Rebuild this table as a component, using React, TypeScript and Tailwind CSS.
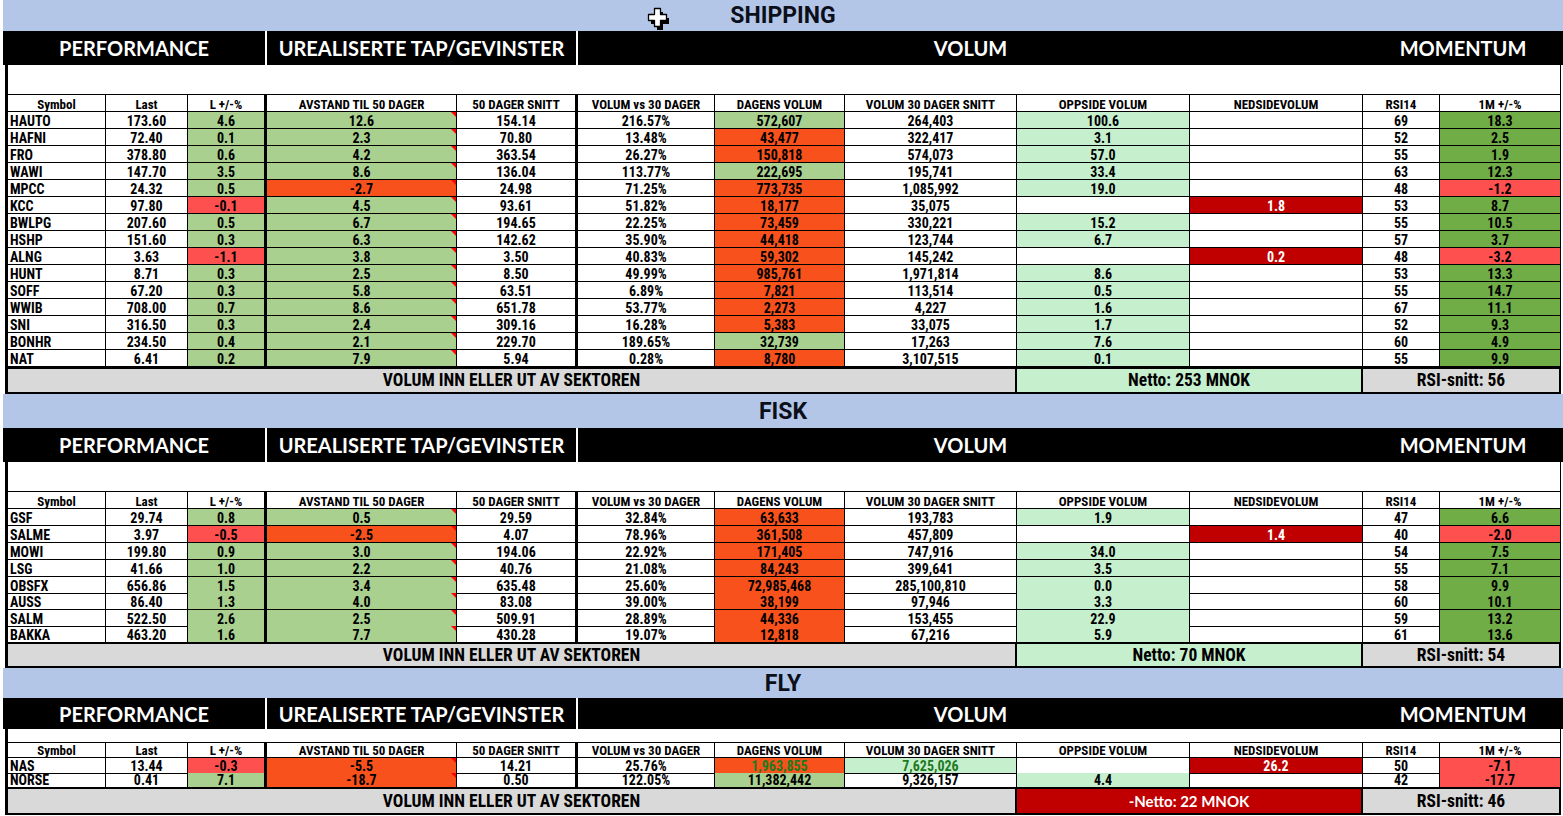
import React from 'react';

type Row = {
  s: string;
  last: string;
  l: string;
  av: string;
  d50: string;
  vvs: string;
  dag: string;
  dagC: 'g' | 'o';
  v30: string;
  opp?: string;
  ned?: string;
  rsi: string;
  m1: string;
  h: string;
  p?: string;
  special?: boolean;
};

const COLS =
  'grid grid-cols-[101px_82px_79px_190px_121px_137px_130px_172px_173px_173px_77px_121px]';

const neg = (v: string) => v.trim().startsWith('-');

const shipping: Row[] = [
  { s: 'HAUTO', last: '173.60', l: '4.6', av: '12.6', d50: '154.14', vvs: '216.57%', dag: '572,607', dagC: 'g', v30: '264,403', opp: '100.6', rsi: '69', m1: '18.3', h: 'h-[17px]' },
  { s: 'HAFNI', last: '72.40', l: '0.1', av: '2.3', d50: '70.80', vvs: '13.48%', dag: '43,477', dagC: 'o', v30: '322,417', opp: '3.1', rsi: '52', m1: '2.5', h: 'h-[17px]' },
  { s: 'FRO', last: '378.80', l: '0.6', av: '4.2', d50: '363.54', vvs: '26.27%', dag: '150,818', dagC: 'o', v30: '574,073', opp: '57.0', rsi: '55', m1: '1.9', h: 'h-[17px]' },
  { s: 'WAWI', last: '147.70', l: '3.5', av: '8.6', d50: '136.04', vvs: '113.77%', dag: '222,695', dagC: 'g', v30: '195,741', opp: '33.4', rsi: '63', m1: '12.3', h: 'h-[17px]' },
  { s: 'MPCC', last: '24.32', l: '0.5', av: '-2.7', d50: '24.98', vvs: '71.25%', dag: '773,735', dagC: 'o', v30: '1,085,992', opp: '19.0', rsi: '48', m1: '-1.2', h: 'h-[17px]' },
  { s: 'KCC', last: '97.80', l: '-0.1', av: '4.5', d50: '93.61', vvs: '51.82%', dag: '18,177', dagC: 'o', v30: '35,075', ned: '1.8', rsi: '53', m1: '8.7', h: 'h-[17px]' },
  { s: 'BWLPG', last: '207.60', l: '0.5', av: '6.7', d50: '194.65', vvs: '22.25%', dag: '73,459', dagC: 'o', v30: '330,221', opp: '15.2', rsi: '55', m1: '10.5', h: 'h-[17px]' },
  { s: 'HSHP', last: '151.60', l: '0.3', av: '6.3', d50: '142.62', vvs: '35.90%', dag: '44,418', dagC: 'o', v30: '123,744', opp: '6.7', rsi: '57', m1: '3.7', h: 'h-[17px]' },
  { s: 'ALNG', last: '3.63', l: '-1.1', av: '3.8', d50: '3.50', vvs: '40.83%', dag: '59,302', dagC: 'o', v30: '145,242', ned: '0.2', rsi: '48', m1: '-3.2', h: 'h-[17px]' },
  { s: 'HUNT', last: '8.71', l: '0.3', av: '2.5', d50: '8.50', vvs: '49.99%', dag: '985,761', dagC: 'o', v30: '1,971,814', opp: '8.6', rsi: '53', m1: '13.3', h: 'h-[17px]' },
  { s: 'SOFF', last: '67.20', l: '0.3', av: '5.8', d50: '63.51', vvs: '6.89%', dag: '7,821', dagC: 'o', v30: '113,514', opp: '0.5', rsi: '55', m1: '14.7', h: 'h-[17px]' },
  { s: 'WWIB', last: '708.00', l: '0.7', av: '8.6', d50: '651.78', vvs: '53.77%', dag: '2,273', dagC: 'o', v30: '4,227', opp: '1.6', rsi: '67', m1: '11.1', h: 'h-[17px]' },
  { s: 'SNI', last: '316.50', l: '0.3', av: '2.4', d50: '309.16', vvs: '16.28%', dag: '5,383', dagC: 'o', v30: '33,075', opp: '1.7', rsi: '52', m1: '9.3', h: 'h-[17px]' },
  { s: 'BONHR', last: '234.50', l: '0.4', av: '2.1', d50: '229.70', vvs: '189.65%', dag: '32,739', dagC: 'g', v30: '17,263', opp: '7.6', rsi: '60', m1: '4.9', h: 'h-[17px]' },
  { s: 'NAT', last: '6.41', l: '0.2', av: '7.9', d50: '5.94', vvs: '0.28%', dag: '8,780', dagC: 'o', v30: '3,107,515', opp: '0.1', rsi: '55', m1: '9.9', h: 'h-[17px]' },
];

const fisk: Row[] = [
  { s: 'GSF', last: '29.74', l: '0.8', av: '0.5', d50: '29.59', vvs: '32.84%', dag: '63,633', dagC: 'o', v30: '193,783', opp: '1.9', rsi: '47', m1: '6.6', h: 'h-[17px]' },
  { s: 'SALME', last: '3.97', l: '-0.5', av: '-2.5', d50: '4.07', vvs: '78.96%', dag: '361,508', dagC: 'o', v30: '457,809', ned: '1.4', rsi: '40', m1: '-2.0', h: 'h-[17px]' },
  { s: 'MOWI', last: '199.80', l: '0.9', av: '3.0', d50: '194.06', vvs: '22.92%', dag: '171,405', dagC: 'o', v30: '747,916', opp: '34.0', rsi: '54', m1: '7.5', h: 'h-[17px]' },
  { s: 'LSG', last: '41.66', l: '1.0', av: '2.2', d50: '40.76', vvs: '21.08%', dag: '84,243', dagC: 'o', v30: '399,641', opp: '3.5', rsi: '55', m1: '7.1', h: 'h-[17px]' },
  { s: 'OBSFX', last: '656.86', l: '1.5', av: '3.4', d50: '635.48', vvs: '25.60%', dag: '72,985,468', dagC: 'o', v30: '285,100,810', opp: '0.0', rsi: '58', m1: '9.9', h: 'h-[16px]' },
  { s: 'AUSS', last: '86.40', l: '1.3', av: '4.0', d50: '83.08', vvs: '39.00%', dag: '38,199', dagC: 'o', v30: '97,946', opp: '3.3', rsi: '60', m1: '10.1', h: 'h-[17px]' },
  { s: 'SALM', last: '522.50', l: '2.6', av: '2.5', d50: '509.91', vvs: '28.89%', dag: '44,336', dagC: 'o', v30: '153,455', opp: '22.9', rsi: '59', m1: '13.2', h: 'h-[16px]' },
  { s: 'BAKKA', last: '463.20', l: '1.6', av: '7.7', d50: '430.28', vvs: '19.07%', dag: '12,818', dagC: 'o', v30: '67,216', opp: '5.9', rsi: '61', m1: '13.6', h: 'h-[16px]' },
];

const fly: Row[] = [
  { s: 'NAS', last: '13.44', l: '-0.3', av: '-5.5', d50: '14.21', vvs: '25.76%', dag: '1,963,855', dagC: 'o', v30: '7,625,026', ned: '26.2', rsi: '50', m1: '-7.1', h: 'h-[15px]', p: 'pt-px', special: true },
  { s: 'NORSE', last: '0.41', l: '7.1', av: '-18.7', d50: '0.50', vvs: '122.05%', dag: '11,382,442', dagC: 'g', v30: '9,326,157', opp: '4.4', rsi: '42', m1: '-17.7', h: 'h-[14px]', p: 'pt-0' },
];

const C_G = 'bg-[#a9d08e]';
const C_O = 'bg-[#f8511c]';
const C_R = 'bg-[#ff5050]';
const C_DG = 'bg-[#70ad47]';
const C_LG = 'bg-[#c6efce]';
const C_DR = 'bg-[#c00000] text-white';

function Cell({
  children,
  cls = '',
  corner = false,
  pad = 'pt-[2px]',
}: {
  children?: React.ReactNode;
  cls?: string;
  corner?: boolean;
  pad?: string;
}) {
  return (
    <div className={`relative flex items-center justify-center whitespace-nowrap border-b border-black leading-none ${pad} ${cls}`}>
      {children}
      {corner && (
        <span className="absolute right-0 top-0 h-0 w-0 border-l-[5px] border-t-[5px] border-l-transparent border-t-[#ff0000]" />
      )}
    </div>
  );
}

function DataRow({ r }: { r: Row }) {
  const p = r.p ?? 'pt-[2px]';
  return (
    <div className={`${COLS} ${r.h} text-[14px] font-bold text-black`}>
      <Cell pad={p} cls="justify-start border-l-[3px] border-r pl-[2px]">{r.s}</Cell>
      <Cell pad={p} cls="border-r">{r.last}</Cell>
      <Cell pad={p} cls={`border-r-[3px] ${neg(r.l) ? C_R : C_G}`}>{r.l}</Cell>
      <Cell pad={p} cls={`border-r ${neg(r.av) ? C_O : C_G}`} corner>
        {r.av}
      </Cell>
      <Cell pad={p} cls="border-r-[3px]">{r.d50}</Cell>
      <Cell pad={p} cls="border-r">{r.vvs}</Cell>
      <Cell pad={p} cls={`border-r ${r.dagC === 'g' ? C_G : C_O} ${r.special ? 'text-[#1e7a1e]' : ''}`}>{r.dag}</Cell>
      <Cell pad={p} cls={`border-r ${r.special ? `${C_LG} text-[#1e7a1e]` : ''}`}>{r.v30}</Cell>
      <Cell pad={p} cls={`border-r ${r.opp ? C_LG : ''}`}>{r.opp ?? ''}</Cell>
      <Cell pad={p} cls={`border-r ${r.ned ? C_DR : ''}`}>{r.ned ?? ''}</Cell>
      <Cell pad={p} cls="border-r">{r.rsi}</Cell>
      <Cell pad={p} cls={`border-r ${neg(r.m1) ? C_R : C_DG}`}>{r.m1}</Cell>
    </div>
  );
}

const HEADERS = [
  'Symbol',
  'Last',
  'L +/-%',
  'AVSTAND TIL 50 DAGER',
  '50 DAGER SNITT',
  'VOLUM vs 30 DAGER',
  'DAGENS VOLUM',
  'VOLUM 30 DAGER SNITT',
  'OPPSIDE VOLUM',
  'NEDSIDEVOLUM',
  'RSI14',
  '1M +/-%',
];

const HEADER_BORDERS = [
  'border-l-[3px] border-r',
  'border-r',
  'border-r-[3px]',
  'border-r',
  'border-r-[3px]',
  'border-r',
  'border-r',
  'border-r',
  'border-r',
  'border-r',
  'border-r',
  'border-r',
];

function Section({
  title,
  titleH,
  barH,
  blankH,
  headH,
  headPad,
  footH,
  rows,
  netto,
  nettoNeg,
  rsi,
}: {
  title: string;
  titleH: string;
  barH: string;
  blankH: string;
  headH: string;
  headPad?: string;
  footH: string;
  rows: Row[];
  netto: string;
  nettoNeg?: boolean;
  rsi: string;
}) {
  return (
    <div className="flex flex-col">
      <div className={`flex ${titleH} items-center justify-center bg-[#b4c6e7] font-['Roboto',sans-serif] text-[23px] font-bold leading-none text-[#0b0f1a]`}>
        {title}
      </div>
      <div className={`flex ${barH} bg-black font-['Lato',sans-serif] text-[20px] font-bold leading-none text-white`}>
        <div className="flex w-[262px] items-center justify-center">PERFORMANCE</div>
        <div className="w-[2px] bg-white" />
        <div className="flex w-[309px] items-center justify-center">UREALISERTE TAP/GEVINSTER</div>
        <div className="w-[2px] bg-white" />
        <div className="flex w-[785px] items-center justify-center">VOLUM</div>
        <div className="flex w-[200px] items-center justify-center">MOMENTUM</div>
      </div>
      <div className="ml-[2px] w-[1556px] font-['Roboto_Condensed','Liberation_Sans_Narrow','Roboto',sans-serif]">
        <div className={`${blankH} border-b border-l-[3px] border-r border-black bg-white`} />
        <div className={`${COLS} ${headH} text-[13px] font-bold text-black`}>
          {HEADERS.map((h, i) => (
            <Cell key={h} pad={headPad ?? 'pt-[2px]'} cls={HEADER_BORDERS[i]}>
              {h}
            </Cell>
          ))}
        </div>
        {rows.map((r) => (
          <DataRow key={r.s} r={r} />
        ))}
        <div className={`grid ${footH} grid-cols-[1012px_346px_198px] text-[17.5px] font-bold leading-none text-black`}>
          <div className="flex items-center justify-center border-y-2 border-l-[3px] border-r-2 border-black bg-[#d9d9d9] pt-px">
            VOLUM INN ELLER UT AV SEKTOREN
          </div>
          {nettoNeg ? (
            <div className="flex items-center justify-center border-y-2 border-r-2 border-black bg-[#c00000] font-['Lato',sans-serif] text-[15px] text-white">
              {netto}
            </div>
          ) : (
            <div className="flex items-center justify-center border-y-2 border-r-2 border-black bg-[#c6efce] pt-px">{netto}</div>
          )}
          <div className="flex items-center justify-center border-y-2 border-r-2 border-black bg-[#d9d9d9] pt-px">{rsi}</div>
        </div>
      </div>
    </div>
  );
}

export default function App() {
  return (
    <div className="relative h-[816px] w-[1563px] overflow-hidden bg-white pl-[3px]">
      <div className="w-[1560px]">
        <Section
          title="SHIPPING"
          titleH="h-[31px]"
          barH="h-[34px]"
          blankH="h-[30px]"
          headH="h-[17px]"
          footH="h-[27px]"
          rows={shipping}
          netto="Netto: 253 MNOK"
          rsi="RSI-snitt: 56"
        />
        <Section
          title="FISK"
          titleH="h-[34px]"
          barH="h-[34px]"
          blankH="h-[30px]"
          headH="h-[17px]"
          footH="h-[26px]"
          rows={fisk}
          netto="Netto: 70 MNOK"
          rsi="RSI-snitt: 54"
        />
        <Section
          title="FLY"
          titleH="h-[30px]"
          barH="h-[31px]"
          blankH="h-[14px]"
          headH="h-[15px]"
          headPad="pt-px"
          footH="h-[28px]"
          rows={fly}
          netto="-Netto: 22 MNOK"
          nettoNeg
          rsi="RSI-snitt: 46"
        />
      </div>
      <svg className="absolute left-[646px] top-[7px]" width="24" height="24" viewBox="0 0 24 24">
        <path d="M9 3h6v6h6v6h-6v6H9v-6H3V9h6z" fill="#000" transform="translate(2 2)" />
        <path d="M8.5 1.5h6v6h6v6h-6v6h-6v-6h-6v-6h6z" fill="#fff" stroke="#000" strokeWidth="1.3" strokeLinejoin="round" />
      </svg>
    </div>
  );
}
